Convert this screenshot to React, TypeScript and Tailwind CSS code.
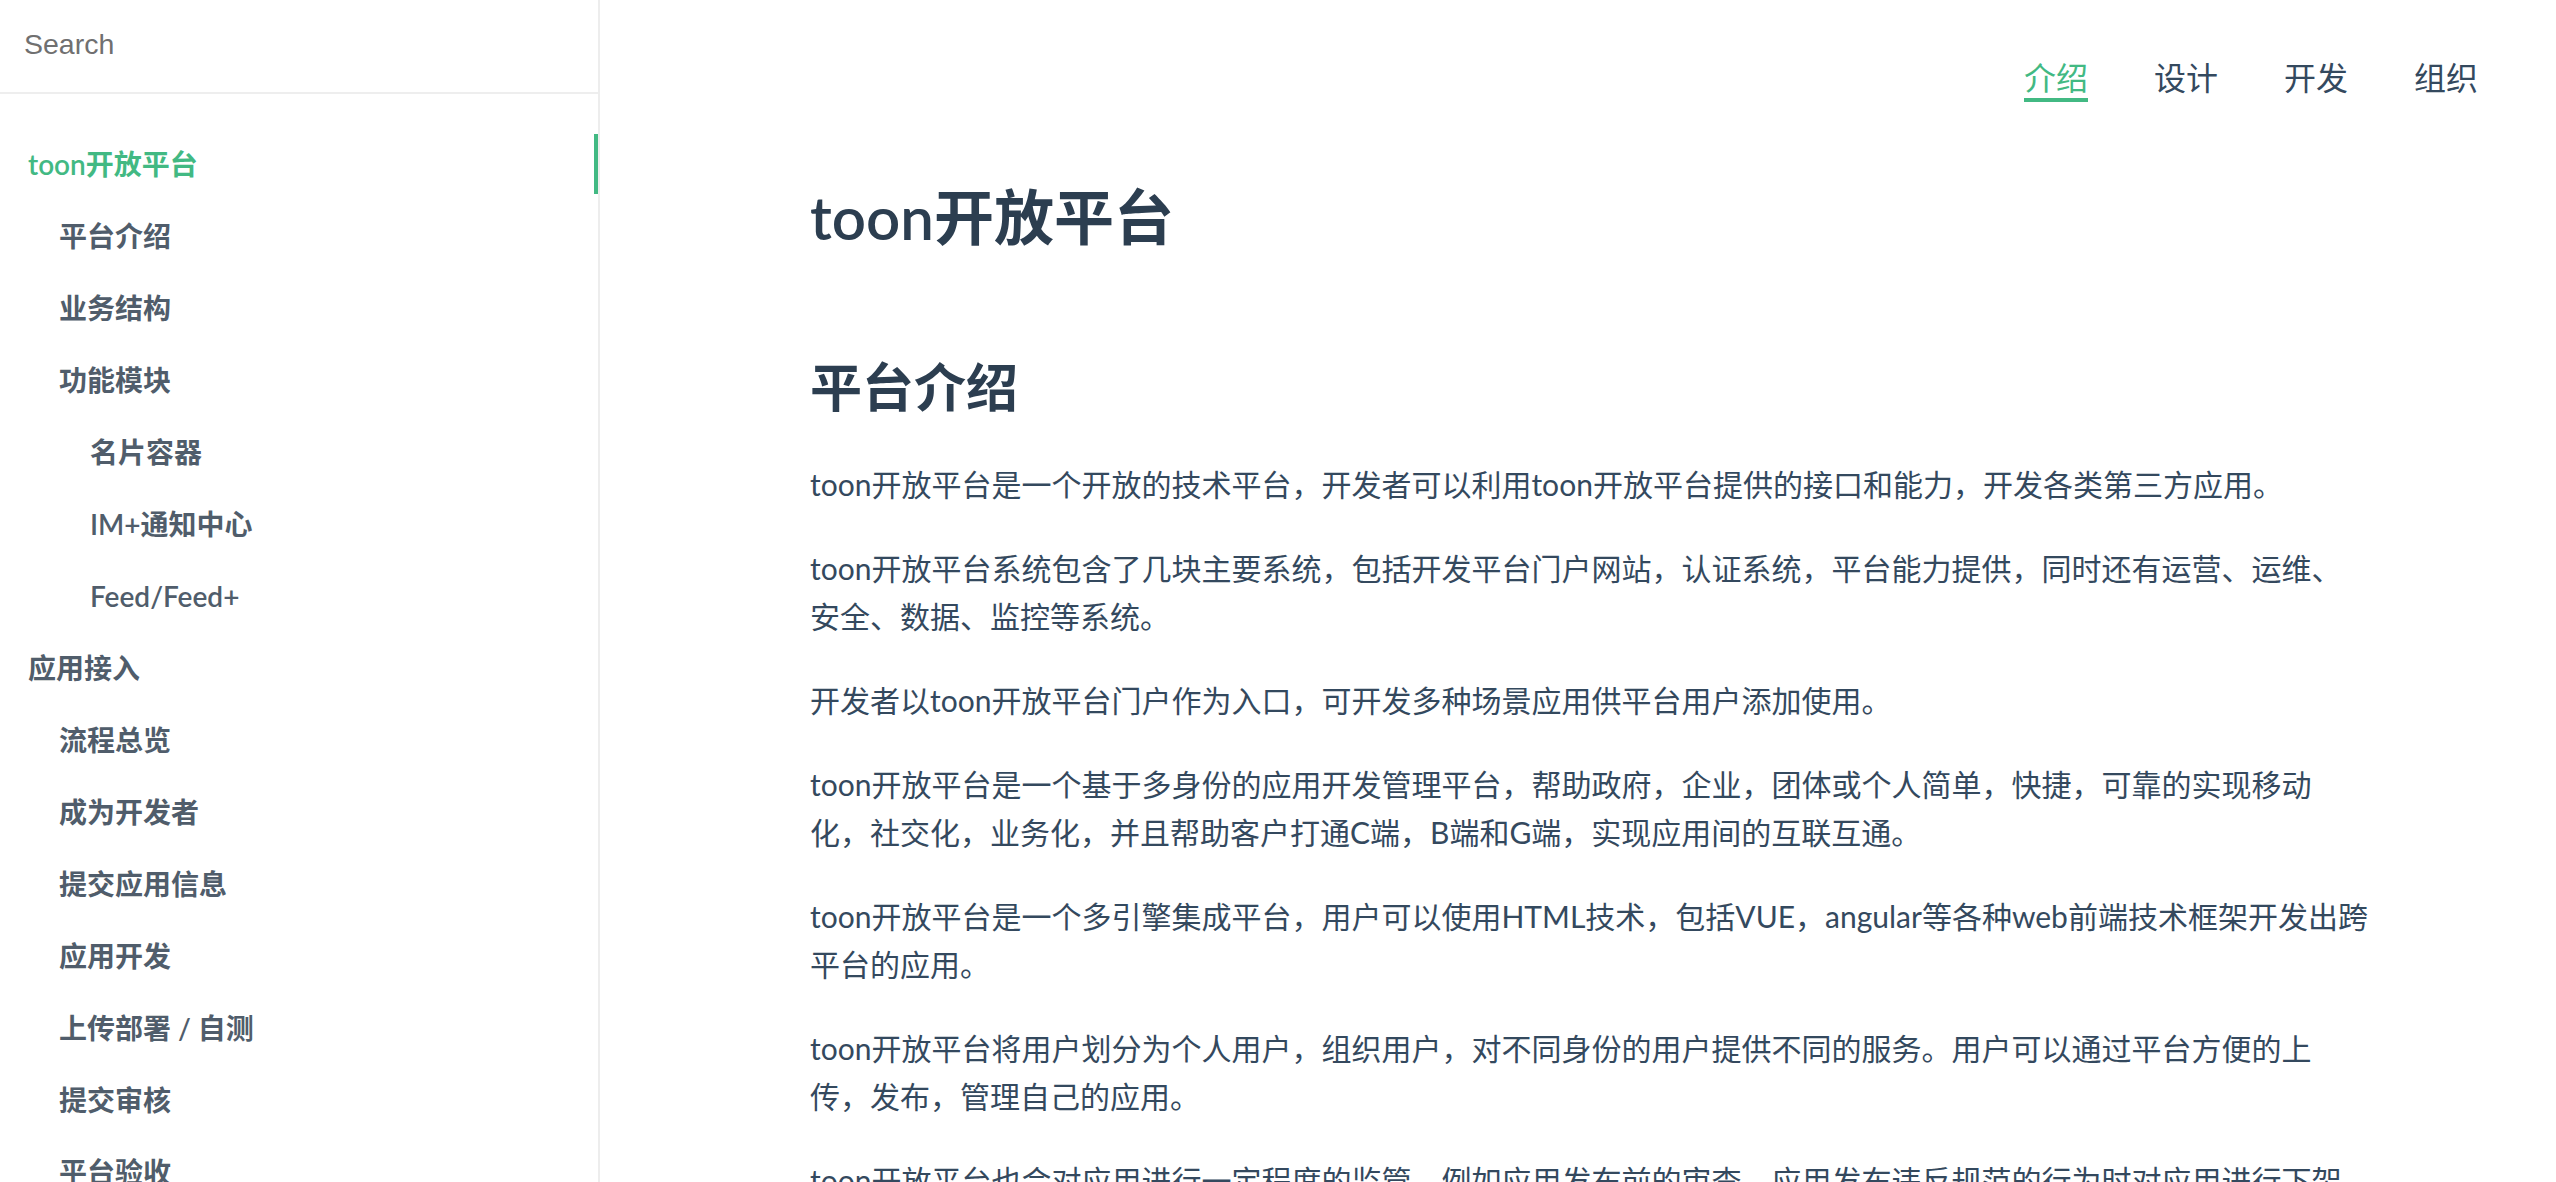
import React from "react";

const FONT = 'Lato, "Noto Sans CJK SC", sans-serif';

type Item = { label: string; level: number; active?: boolean };

const items: Item[] = [
  { label: "toon开放平台", level: 0, active: true },
  { label: "平台介绍", level: 1 },
  { label: "业务结构", level: 1 },
  { label: "功能模块", level: 1 },
  { label: "名片容器", level: 2 },
  { label: "IM+通知中心", level: 2 },
  { label: "Feed/Feed+", level: 2 },
  { label: "应用接入", level: 0 },
  { label: "流程总览", level: 1 },
  { label: "成为开发者", level: 1 },
  { label: "提交应用信息", level: 1 },
  { label: "应用开发", level: 1 },
  { label: "上传部署 / 自测", level: 1 },
  { label: "提交审核", level: 1 },
  { label: "平台验收", level: 1 },
  { label: "发布上线", level: 1 },
];

// Each paragraph as its visual lines (as wrapped in the reference)
const paragraphs: string[][] = [
  ["toon开放平台是一个开放的技术平台，开发者可以利用toon开放平台提供的接口和能力，开发各类第三方应用。"],
  [
    "toon开放平台系统包含了几块主要系统，包括开发平台门户网站，认证系统，平台能力提供，同时还有运营、运维、",
    "安全、数据、监控等系统。",
  ],
  ["开发者以toon开放平台门户作为入口，可开发多种场景应用供平台用户添加使用。"],
  [
    "toon开放平台是一个基于多身份的应用开发管理平台，帮助政府，企业，团体或个人简单，快捷，可靠的实现移动",
    "化，社交化，业务化，并且帮助客户打通C端，B端和G端，实现应用间的互联互通。",
  ],
  [
    "toon开放平台是一个多引擎集成平台，用户可以使用HTML技术，包括VUE，angular等各种web前端技术框架开发出跨",
    "平台的应用。",
  ],
  [
    "toon开放平台将用户划分为个人用户，组织用户，对不同身份的用户提供不同的服务。用户可以通过平台方便的上",
    "传，发布，管理自己的应用。",
  ],
  [
    "toon开放平台也会对应用进行一定程度的监管，例如应用发布前的审查，应用发布违反规范的行为时对应用进行下架",
    "处理，保障平台用户的使用安全。",
  ],
];

const navs = [
  { label: "介绍", active: true },
  { label: "设计" },
  { label: "开发" },
  { label: "组织" },
];

export default function App() {
  return (
    <div
      className="flex h-[1182px] w-full overflow-hidden bg-white text-[#34495e]"
      style={{ fontFamily: FONT }}
    >
      {/* Sidebar */}
      <aside className="relative flex h-full w-[600px] shrink-0 flex-col overflow-hidden border-r-2 border-[#ededed]">
        <div className="flex h-[94px] shrink-0 items-center border-b-2 border-[#eeeeee] px-[24px] pb-[4px]">
          <input
            className="w-full bg-transparent text-[28.5px] text-[#333] outline-none placeholder:text-[#707070]"
            style={{ fontFamily: '"Liberation Sans", Arial, sans-serif' }}
            placeholder="Search"
          />
        </div>
        <ul className="pt-[34px]">
          {items.map((it) => (
            <li
              key={it.label}
              className={
                "relative flex h-[72px] items-center text-[28px] font-semibold " +
                (it.level === 0 ? "pl-[28px] " : it.level === 1 ? "pl-[59px] " : "pl-[90px] ") +
                (it.active ? "text-[#42b983]" : "text-[#505d6b]")
              }
            >
              {it.label}
              {it.active && (
                <span className="absolute right-0 top-[6px] h-[60px] w-[4px] bg-[#42b983]" />
              )}
            </li>
          ))}
        </ul>
      </aside>

      {/* Main */}
      <main className="relative h-full flex-1 overflow-hidden">
        <nav className="absolute right-[78px] top-[58px] flex gap-[66px] text-[32px] leading-[40px]">
          {navs.map((n) => (
            <span
              key={n.label}
              className={
                n.active
                  ? "border-b-[4px] border-[#42b983] text-[#42b983]"
                  : "pb-[4px] text-[#34495e]"
              }
            >
              {n.label}
            </span>
          ))}
        </nav>

        <article className="ml-[210px] w-[1600px] pt-[181px]">
          <h1 className="text-[60px] font-semibold leading-[72px] text-[#2c3e50]">
            toon开放平台
          </h1>
          <h2 className="mt-[102px] text-[52px] font-semibold leading-[64px] text-[#2c3e50]">
            平台介绍
          </h2>
          <div className="mt-[41px]">
            {paragraphs.map((lines, i) => (
              <p key={i} className="mb-[36px] text-[30px] leading-[48px] text-[#34495e]">
                {lines.map((l, j) => (
                  <React.Fragment key={j}>
                    {j > 0 && <br />}
                    {l}
                  </React.Fragment>
                ))}
              </p>
            ))}
          </div>
        </article>
      </main>
    </div>
  );
}
